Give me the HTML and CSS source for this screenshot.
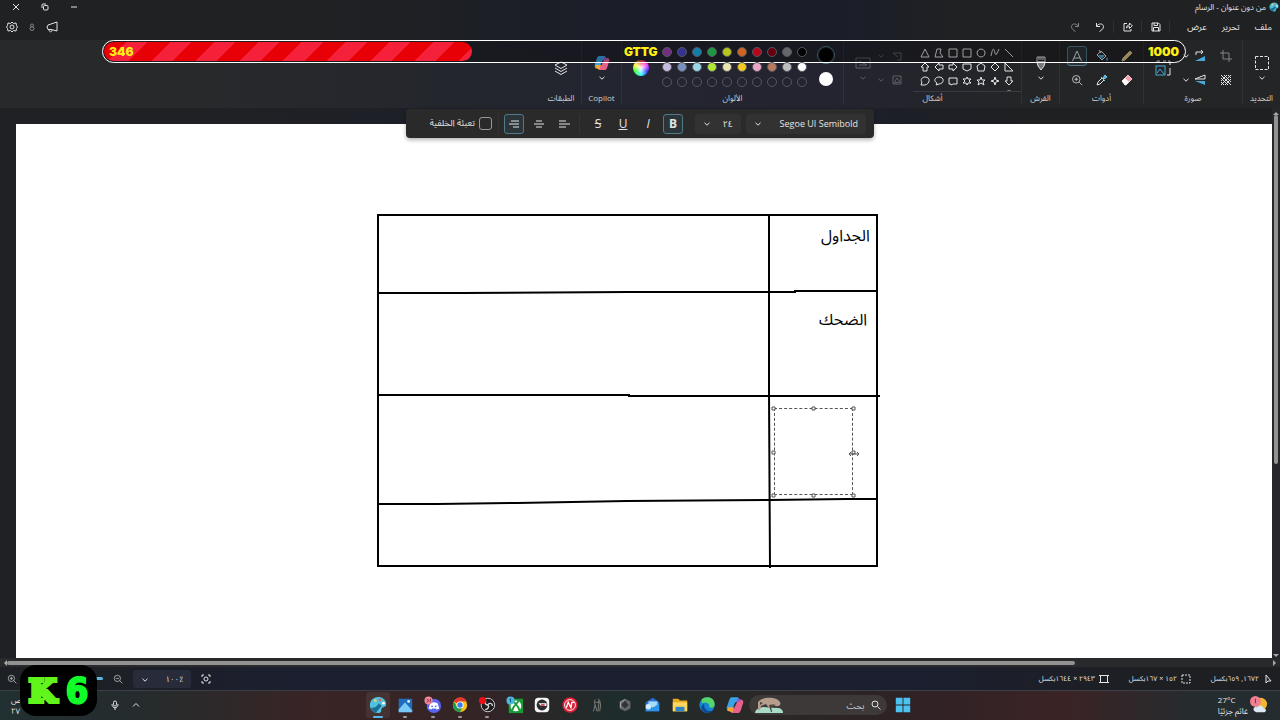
FILE: index.html
```html
<!DOCTYPE html>
<html lang="ar" dir="rtl">
<head>
  <meta charset="UTF-8" />
  <meta name="viewport" content="width=device-width, initial-scale=1.0" />
  <title>من دون عنوان - الرسام</title>
  <link rel="stylesheet" href="styles.css">
</head>
<body>
  <!-- Shared icons -->
  <svg class="sprite" aria-hidden="true">
    <symbol id="chev" viewBox="0 0 8 8"><path d="M1.5 2.8 4 5.2 6.500 2.800"/></symbol>
    <symbol id="palette" viewBox="0 0 20 20"><path fill="#4fc3dd" stroke="none" d="M10 1c5 0 9 3 9 8 0 4-4 3-5 5s1 5-4 5c-5 0-9-4-9-9s4-9 9-9z"/><path fill="#1d6e94" stroke="none" d="M2 13c3 0 6 0 9-5l3 3c-3 4-5 5-6 8-3-1-5-3-6-6z"/><circle cx="7" cy="5" r="1.500" fill="#e9d76b" stroke="none"/><circle cx="12" cy="4.500" r="1.500" fill="#d76a5b" stroke="none"/><circle cx="16" cy="8" r="1.500" fill="#fff" stroke="none"/></symbol>
    <symbol id="copilot" viewBox="0 0 16 16"><path fill="#3aa3e8" stroke="none" d="M5 1h5c1 0 2 1 2 3l-2 1-2 1-2 5c-.5 1-1 2-3 2-2 0-3-2-2-4l2-6c.5-1 1-2 2-2z"/><path fill="#e8618c" stroke="none" d="M11 15H6c-1 0-2-1-1-3l2-1 3-6c.5-1 1-2 3-2 2 0 3 2 2 4l-2 6c-.5 1-1 2-2 2z"/><path fill="#f0a63a" stroke="none" d="M2 10h5l-1 4c-.5 1-1 1-2 0L1 13z"/><path fill="#8c5be0" stroke="none" d="M10 2c2 0 2 1 3 3H9z"/></symbol>
    <symbol id="zoomin" viewBox="0 0 16 16"><circle cx="7" cy="7" r="5"/><path d="m11 11 4 4M4.500 7h5M7 4.500v5"/></symbol>
    <symbol id="zoomout" viewBox="0 0 16 16"><circle cx="7" cy="7" r="5"/><path d="m11 11 4 4M4.500 7h5"/></symbol>
  </svg>

  <!-- Title bar -->
  <header class="titlebar">
    <div class="app-title">
      <svg class="ico s10"><use href="#palette"/></svg>
      <span>من دون عنوان - الرسام</span>
    </div>
    <div class="window-buttons">
      <button aria-label="تصغير"><svg class="ico s8" viewBox="0 0 8 8"><path d="M1 4h6"/></svg></button>
      <button aria-label="استعادة"><svg class="ico s8" viewBox="0 0 8 8"><rect x="2.500" y="2.500" width="4.500" height="4.500" rx="1"/><path d="M1 5V2q0-1 1-1h3"/></svg></button>
      <button aria-label="إغلاق"><svg class="ico s8" viewBox="0 0 8 8"><path d="m1 1 6 6M7 1 1 7"/></svg></button>
    </div>
  </header>

  <nav class="menubar">
    <div class="menus">
      <button>ملف</button>
      <button>تحرير</button>
      <button>عرض</button>
    </div>
    <div class="quick">
      <button aria-label="حفظ"><svg class="ico s10" viewBox="0 0 10 10"><path d="M1 1h6.500L9 2.500V9H1zM3 1v2.500h3.500V1M2.500 9V5.500h5V9"/></svg></button>
      <button aria-label="مشاركة"><svg class="ico s10" viewBox="0 0 10 10"><path d="M4 1.500H1V9h7V7M3.500 6c0-2 1-3 3-3V1L9.300 3.800 6.500 6.500V4.700c-1.500 0-2 .3-3 1.300z"/></svg></button>
      <button aria-label="تراجع"><svg class="ico s10" viewBox="0 0 10 10"><path d="M1.500 1v3.500H5M1.700 4.300C3 1.500 8 .8 8.500 4.500 8.500 7 6.500 8 4.500 9.500"/></svg></button>
      <button aria-label="إعادة" class="dim"><svg class="ico s10" viewBox="0 0 10 10"><path d="M8.500 1v3.500H5M8.300 4.300C7 1.500 2 .8 1.500 4.500 1.500 7 3.500 8 5.500 9.500"/></svg></button>
    </div>
    <div class="menu-end">
      <button aria-label="ملاحظات"><svg class="ico s12" viewBox="0 0 12 12"><path d="M11 1v9L5 8.500H2L1 6l1-2zM3 8.500c0 3 3 3 3 .5"/></svg></button>
      <button aria-label="الحساب"><svg class="ico s8 dim" viewBox="0 0 8 8"><circle cx="4" cy="2.500" r="1.500"/><circle cx="4" cy="5.500" r="2"/></svg></button>
      <button aria-label="الإعدادات"><svg class="ico s12" viewBox="0 0 12 12"><path d="m6 1 1.500 1.500L10 2l.5 2.500L11.500 6l-1 1.500L10 10l-2.500-.5L6 11 4.500 9.500 2 10l-.5-2.500L.5 6l1-1.500L2 2l2.500.5z"/><circle cx="6" cy="6" r="2"/></svg></button>
    </div>
  </nav>

  <!-- Ribbon -->
  <section class="ribbon">
    <div class="group g-select">
      <div class="tools stack">
        <button aria-label="تحديد"><svg class="ico s16" viewBox="0 0 16 16"><rect x="1.500" y="1.500" width="13" height="13" stroke-dasharray="3 1.500"/></svg></button>
        <svg class="ico s8"><use href="#chev"/></svg>
      </div>
      <h2>التحديد</h2>
    </div>

    <div class="group g-image">
      <div class="tools image-grid">
        <button aria-label="اقتصاص" class="dim"><svg class="ico s12" viewBox="0 0 12 12"><path d="M3 0v9h9M0 3h9v9"/></svg></button>
        <button aria-label="استدارة"><svg class="ico s12" viewBox="0 0 12 12"><path d="M2 5V2h7M7 0l2 2-2 2"/><path fill="#4aa8d8" stroke="none" d="M1 11h10V6z"/></svg></button>
        <svg class="ico s8"><use href="#chev"/></svg>
        <button aria-label="تغيير الحجم" class="resize"><svg class="ico s16" viewBox="0 0 16 16"><path d="M2 3V1h3M8 1h3M13 1h2v4M15 8v7h-3"/><g stroke="#4aa8d8"><rect x="1" y="6" width="9" height="9"/><path d="m2 13 3-4 4 5"/></g></svg></button>
        <button aria-label="إزالة الخلفية"><svg class="ico s12" viewBox="0 0 12 12"><path d="M1 1l10 10M1 4l7 7M4 1l7 7M8 1l3 3M1 8l3 3M11 1 1 11M7 1 1 7M11 5l-6 6"/></svg></button>
        <button aria-label="انعكاس"><svg class="ico s12" viewBox="0 0 12 12"><path d="M1 5 11 1v4z"/><path fill="#4aa8d8" stroke="none" d="M1 7h10v4z"/></svg></button>
        <svg class="ico s8"><use href="#chev"/></svg>
      </div>
      <h2>صورة</h2>
    </div>

    <div class="group g-tools">
      <div class="tools tool-grid">
        <button aria-label="قلم"><svg class="ico s12" viewBox="0 0 12 12"><path fill="#e4c070" stroke="#c8c0a0" d="M1 11l1-3 7-7 2 2-7 7z"/></svg></button>
        <button aria-label="تعبئة"><svg class="ico s12" viewBox="0 0 12 12"><path d="M1 5l4-4 5 5-4 4zM3 0l2 3"/><path fill="#4aa8d8" stroke="none" d="M2 5h7L6 9zM11 7c2 3 0 4 0 4s-2-1 0-4z"/></svg></button>
        <button aria-label="نص" class="on"><svg class="ico s12" viewBox="0 0 12 12"><path d="M1.500 11 6 1l4.500 10M3 8h6"/></svg></button>
        <button aria-label="ممحاة"><svg class="ico s12" viewBox="0 0 12 12"><path fill="#f3a0ac" stroke="#e8c8cc" d="M1 7l6-6 4 4-6 6H4z"/><path fill="#fff" stroke="none" d="M1 7l3-3 4 4-3 3H4z"/></svg></button>
        <button aria-label="منتقي الألوان"><svg class="ico s12" viewBox="0 0 12 12"><path d="M1 11l1-3 4-4 2 2-4 4z"/><path fill="#4aa8d8" stroke="#8cc8e8" d="M5 3l4 4M7 4l2-3 2 2-3 2z"/></svg></button>
        <button aria-label="مكبر"><svg class="ico s12"><use href="#zoomin"/></svg></button>
      </div>
      <h2>أدوات</h2>
    </div>

    <div class="group g-brush">
      <div class="tools stack">
        <button aria-label="الفرش"><svg class="ico s16" viewBox="0 0 16 16"><path d="M4 2h8v5H4zM6 2v3M8 2v3M10 2v3"/><path fill="#777" d="M4 7h8l-1 4-3 4-3-4z"/></svg></button>
        <svg class="ico s8"><use href="#chev"/></svg>
      </div>
      <h2>الفرش</h2>
    </div>

    <div class="group g-shapes">
      <div class="tools">
        <div class="gallery" id="gallery"></div>
        <div class="shape-opts faint">
          <button aria-label="المخطط التفصيلي"><svg class="ico s10" viewBox="0 0 10 10"><path d="M1 2h8v7H5M1 2l5 4"/></svg></button>
          <svg class="ico s8"><use href="#chev"/></svg>
          <button aria-label="تعبئة الشكل"><svg class="ico s10" viewBox="0 0 10 10"><path d="M1 1h8v8H1zM2 8l3-5 3 4z"/></svg></button>
          <svg class="ico s8"><use href="#chev"/></svg>
        </div>
        <div class="stack faint">
          <button aria-label="الحجم"><svg class="ico s16" viewBox="0 0 16 16"><path d="M1 3h14v10H1zM4 6l8 4M4 10h8"/></svg></button>
          <svg class="ico s8"><use href="#chev"/></svg>
        </div>
      </div>
      <h2>أشكال</h2>
    </div>

    <div class="group g-colors">
      <div class="tools">
        <div class="current">
          <button aria-label="اللون 1" class="color1"></button>
          <button aria-label="اللون 2" class="color2"></button>
        </div>
        <div class="swatches" id="swatches"></div>
        <button class="wheel" aria-label="تحرير الألوان"></button>
      </div>
      <h2>الألوان</h2>
    </div>

    <div class="group g-copilot">
      <div class="tools stack">
        <button aria-label="Copilot"><svg class="ico s16"><use href="#copilot"/></svg></button>
        <svg class="ico s8"><use href="#chev"/></svg>
      </div>
      <h2>Copilot</h2>
    </div>

    <div class="group g-layers">
      <div class="tools stack">
        <button aria-label="الطبقات"><svg class="ico s14" viewBox="0 0 14 14"><path d="m7 1 6 3-6 3.500L1 4zM1 7l6 3.500L13 7M1 10l6 3.500 6-3.500"/></svg></button>
      </div>
      <h2>الطبقات</h2>
    </div>
  </section>

  <!-- Stream goal bar -->
  <div class="goal">
    <div class="goal-fill"></div>
    <span>1000</span>
    <span>GTTG</span>
    <span>346</span>
  </div>

  <!-- Drawing area -->
  <main class="workspace">
    <div class="vscroll"><i class="up"></i><b></b><i class="down"></i></div>
    <div class="paper">
      <svg class="drawing" viewBox="0 0 504 356" aria-hidden="true">
        <path d="M0 2h501M1 1v352M500 1v352M0 353h501M392 2v178l1 175"/>
        <path d="M0 80h84l167-1h167v-1h83M1 182h251v1h251M0 291h60l80-1 110-2 143-1 77-1h30"/>
      </svg>
      <span class="note note-a">الجداول</span>
      <span class="note note-b">الضحك</span>
      <textarea class="textbox" aria-label="مربع نص"></textarea>
      <svg class="handles" viewBox="0 0 90 94" aria-hidden="true">
        <path d="M1 1h3v3H1zM41 1h3v3h-3zM81 1h3v3h-3zM1 45h3v3H1zM81 45h3v3h-3zM1 88h3v3H1zM41 88h3v3h-3zM81 88h3v3h-3z"/>
        <path d="M78 48h10M80 46l-2 2 2 2M86 46l2 2-2 2"/>
      </svg>
    </div>
  </main>
  <div class="hscroll"><i class="right"></i><b></b><i class="left"></i></div>

  <!-- Text toolbar -->
  <div class="textbar">
    <label class="pick font"><select aria-label="الخط"><option>Segoe UI Semibold</option></select><svg class="ico s8"><use href="#chev"/></svg></label>
    <label class="pick size"><select aria-label="حجم الخط"><option>٢٤</option></select><svg class="ico s8"><use href="#chev"/></svg></label>
    <div class="fmt">
      <button class="on"><b>B</b></button>
      <button><i>I</i></button>
      <button><u>U</u></button>
      <button><s>S</s></button>
    </div>
    <div class="fmt align">
      <button aria-label="يسار"><svg class="ico s12" viewBox="0 0 12 12"><path d="M1 3h7M1 6h11M1 9h7"/></svg></button>
      <button aria-label="وسط"><svg class="ico s12" viewBox="0 0 12 12"><path d="M3 3h6M1 6h10M3 9h6"/></svg></button>
      <button aria-label="يمين" class="on"><svg class="ico s12" viewBox="0 0 12 12"><path d="M3 3h8M1 6h10M5 9h6"/></svg></button>
    </div>
    <label class="fillbg"><input type="checkbox"><span>تعبئة الخلفية</span></label>
  </div>

  <!-- Status bar -->
  <footer class="status">
    <div class="info pos"><svg class="ico s10" viewBox="0 0 10 10"><path d="M3 1v8l2-2h3z"/></svg><span>١٦٧٢, ٦٥٩بكسل</span></div>
    <div class="info sel"><svg class="ico s10" viewBox="0 0 10 10"><path d="M1 1h8v8H1z" stroke-dasharray="2 1"/></svg><span>١٥٢ × ١٦٧بكسل</span></div>
    <div class="info"><svg class="ico s10" viewBox="0 0 10 10"><path d="M1.500 1.500h7v7h-7zM0 1.500h10M0 8.500h10"/></svg><span>٢٩٤٣ × ١٦٤٤بكسل</span></div>
    <div class="zoom">
      <button aria-label="ملاءمة"><svg class="ico s10" viewBox="0 0 10 10"><path d="M1 3V1h2M7 1h2v2M9 7v2H7M3 9H1V7"/><circle cx="5" cy="5" r="2"/></svg></button>
      <label class="pick level"><select aria-label="تكبير"><option>٪١٠٠</option></select><svg class="ico s8"><use href="#chev"/></svg></label>
      <button aria-label="تصغير"><svg class="ico s10"><use href="#zoomout"/></svg></button>
      <input type="range" aria-label="مستوى التكبير" value="50">
      <button aria-label="تكبير"><svg class="ico s10"><use href="#zoomin"/></svg></button>
    </div>
  </footer>

  <!-- Windows taskbar -->
  <footer class="taskbar">
    <div class="weather">
      <svg viewBox="0 0 20 20"><circle cx="12" cy="9" r="7" fill="#f2b632"/><path fill="#dce8f6" d="M5 17c-3-3 1-6 3-4 1-4 7-3 7 1 4 0 3 4 1 4H7z"/><circle cx="6" cy="6" r="6" fill="#f07f92"/><path d="M6 3v5" stroke="#7a1f35"/></svg>
      <p><span dir="ltr">27°C</span><span>غائم جزئيًا</span></p>
    </div>
    <div class="center">
      <button aria-label="ابدأ"><svg viewBox="0 0 20 20"><path fill="#4cc2f1" d="M2 2h7.500v7.500H2zM10.500 2H18v7.500h-7.500zM2 10.500h7.500V18H2zM10.500 10.500H18V18h-7.500z"/></svg></button>
      <label class="search">
        <svg class="ico s10" viewBox="0 0 10 10"><circle cx="4" cy="4" r="3"/><path d="m6.500 6.500 3 3"/></svg>
        <input type="text" placeholder="بحث" aria-label="بحث">
        <svg class="art" viewBox="0 0 28 16"><path fill="#a9dcc8" d="M0 16c1-5 5-5 8-6l14 1c4 0 6 2 6 5z"/><path fill="#b59f8c" d="M3 5c3-5 18-6 22 0 2 3-2 5-4 4l-3-1-4 3-3-4-5 2-1 4H3z"/><path fill="#4d3e38" d="M14 8l2 7h1l-1-6 5-2zM5 5l3 1-3 2z"/></svg>
      </label>
      <div class="apps">
        <button aria-label="Copilot"><svg viewBox="0 0 16 16"><use href="#copilot"/></svg></button>
        <button aria-label="Edge"><svg viewBox="0 0 20 20"><circle cx="10" cy="10" r="8.500" fill="#1685d1"/><path fill="#55d66b" d="M4 4c5-5 15-3 14.500 6-.5 3-5 4-6 2 1-4-4-6-8-4z"/><path fill="#0b4c94" d="M7 9c-1 6 4 9 9 7-3 4-10 3-12-1-1-3 0-5 3-6z"/></svg></button>
        <button aria-label="المستكشف"><svg viewBox="0 0 20 20"><path fill="#e9a91f" d="M2 3h6l2 2h8v12H2z"/><path fill="#ffd75e" d="M2 7h16v10H2z"/><path fill="#2f83c9" d="M5 12h10v5H5z"/></svg></button>
        <button aria-label="البريد"><svg viewBox="0 0 20 20"><path fill="#2a6fd6" d="M3 7l8-5 7 5v10H3z"/><path fill="#a8dafa" d="M6 6h10v7H6z"/><path fill="#2e93ea" d="M3 8l8 5 7-5v9H3z"/><circle cx="6" cy="12" r="3" fill="#d5edff"/></svg></button>
        <button aria-label="Unity"><svg viewBox="0 0 20 20"><path fill="#64686b" d="m10 3 6 3v8l-6 3-6-3V6z"/><path fill="#303436" d="m10 5 4 5-4 4-4-4z"/><path stroke="#aaa" fill="none" d="M5 13V7l5-3"/></svg></button>
        <button aria-label="لعبة"><svg viewBox="0 0 20 20"><path fill="none" stroke="#85867f" d="M8 4l-1 3 1 3-2 7M8 10l2 7M12 3v6l-1 8M13 5l1 5-1 7M8 7h5"/></svg></button>
        <button aria-label="تطبيق N"><svg viewBox="0 0 20 20"><circle cx="10" cy="10" r="8.500" fill="#d91e35"/><circle cx="10" cy="10" r="6" fill="none" stroke="#fff"/><path fill="none" stroke="#fff" stroke-width="1.500" d="M6 13l2-6 3 6 1-6h3"/></svg></button>
        <button aria-label="مشغل"><svg viewBox="0 0 20 20"><rect x="2" y="2" width="16" height="16" rx="4" fill="#f4f4f4"/><circle cx="10" cy="10" r="6" fill="#2b2b2f"/><path fill="#fff" d="M6 8h9v3H9z"/><path fill="#d13d4a" d="M9 9h4v2H9z"/></svg></button>
        <button aria-label="Xbox"><svg viewBox="0 0 20 20"><path fill="#189b35" d="M3 3h16v16H3z"/><circle cx="11" cy="11" r="6" fill="#fff"/><path stroke="#189b35" stroke-width="2" fill="none" d="M7 16c1-4 4-7 4-7s3 3 4 7M8 6l3 3 3-3"/><circle cx="5" cy="5" r="4.500" fill="#4cb7e0"/><path fill="none" stroke="#104c70" d="M4 4l1-1v4"/></svg></button>
        <button aria-label="OBS" class="open"><svg viewBox="0 0 20 20"><circle cx="11" cy="10" r="7.500" fill="#1d1b1d" stroke="#d8d8d8"/><path fill="none" stroke="#d8d8d8" stroke-width="1.500" d="M11 10c-3 0-4-3-2-5M11 10c1-3 5-2 5 1M11 10c2 2 0 5-3 5"/><circle cx="5" cy="5" r="4" fill="#e80e13"/></svg></button>
        <button aria-label="Chrome" class="open"><svg viewBox="0 0 20 20"><circle cx="10" cy="10" r="8" fill="#fbc116"/><path fill="#e33b2e" d="M3 6c4-7 13-5 14.500 0H10v4z"/><path fill="#229a4d" d="M3 6c-3 6 2 12 7 12l3-6-6 0z"/><circle cx="10" cy="10" r="4" fill="#fff"/><circle cx="10" cy="10" r="3" fill="#3b7ded"/></svg></button>
        <button aria-label="Discord" class="open"><svg viewBox="0 0 20 20"><circle cx="11" cy="11" r="8" fill="#5865f2"/><path fill="#fff" d="M7 8q4-2 8 0l2 6-3 1-1-1h-4l-1 1-3-1z"/><circle cx="9" cy="11.500" r="1" fill="#5865f2"/><circle cx="13" cy="11.500" r="1" fill="#5865f2"/><circle cx="5" cy="5" r="4.500" fill="#ef8a9b"/><path fill="none" stroke="#7b1b35" d="M3 7c3-1 2-4 0-3M7 3v4"/></svg></button>
        <button aria-label="الصور" class="open"><svg viewBox="0 0 20 20"><path fill="#1e6cbb" d="M3 3h15v15H3z"/><path fill="#78c9f8" d="m3 15 7-8 8 9v2H3z"/><circle cx="14" cy="6" r="1.500" fill="#fff"/></svg></button>
        <button aria-label="الرسام" class="open active"><svg viewBox="0 0 20 20"><use href="#palette"/></svg></button>
      </div>
    </div>
    <div class="tray">
      <button aria-label="إظهار المخفي"><svg class="ico s8" viewBox="0 0 8 8"><path d="M1 5.500 4 2.500l3 3"/></svg></button>
      <button aria-label="الميكروفون"><svg class="ico s10" viewBox="0 0 10 10"><rect x="3.500" y="1" width="3" height="5" rx="1.500"/><path d="M2 4c0 5 6 5 6 0M5 8v2"/></svg></button>
      <p class="clock"><span>ص</span><span>٢٧</span></p>
    </div>
  </footer>

  <div class="keys"><span class="k">K</span><span class="n">6</span></div>

  <script src="script.js"></script>
</body>
</html>
```
FILE: styles.css
```css
* {
  box-sizing: border-box;
}

body {
  margin: 0;
  height: 100vh;
  display: flex;
  flex-direction: column;
  position: relative;
  overflow: hidden;
  background: #1e2023;
  color: #e4e4e4;
  font-family: "Open Sans", "Noto Sans Arabic", "DejaVu Sans Condensed", "DejaVu Sans", sans-serif;
  font-size: 8px;
}

button {
  display: flex;
  align-items: center;
  justify-content: center;
  padding: 0;
  border: 0;
  background: none;
  color: inherit;
  font: inherit;
}

select,
input {
  font: inherit;
  color: inherit;
}

h2, p {
  margin: 0;
}

.sprite {
  position: absolute;
  width: 0;
  height: 0;
}

.ico {
  display: block;
  flex: none;
  fill: none;
  stroke: currentColor;
}

.s8 { width: 8px; height: 8px; }
.s10 { width: 10px; height: 10px; }
.s12 { width: 12px; height: 12px; }
.s14 { width: 14px; height: 14px; }
.s16 { width: 16px; height: 16px; }

.dim { opacity: 0.5; }
.faint { opacity: 0.3; }

/* title + menu */
.titlebar,
.menubar {
  display: flex;
  align-items: center;
  background: linear-gradient(90deg, #1f2123 25%, #1b1d29 50%, #1b1d29 65%, #1f2123 75%);
}

.titlebar {
  height: 14px;
  justify-content: space-between;
}

.app-title {
  display: flex;
  gap: 3px;
  align-items: center;
  padding-right: 1px;
}

.window-buttons {
  display: flex;
  gap: 21px;
  padding-left: 12px;
}

.menubar {
  height: 26px;
}

.menus {
  display: flex;
  width: 110px;
  padding-right: 8px;
  gap: 15px;
  font-size: 9px;
}

.quick {
  display: flex;
}

.quick button {
  width: 28px;
  height: 12px;
  border-right: 1px solid #2f3136;
}

.quick button.dim {
  border: 0;
  width: 22px;
}

.menu-end {
  display: flex;
  align-items: center;
  gap: 10px;
  margin-right: auto;
  padding-left: 6px;
}

/* ribbon */
.ribbon {
  display: flex;
  height: 68px;
  background: linear-gradient(90deg, #27292b 15%, #23252f 45%, #23242f 65%, #242527 80%);
}

.group {
  display: flex;
  flex-direction: column;
  padding-top: 4px;
  border-left: 1px solid #303238;
  height: 64px;
}

.group h2 {
  font-size: 8px;
  line-height: 12px;
  font-weight: 400;
  text-align: center;
  white-space: nowrap;
  color: #d0d0d0;
}

.g-select { width: 38px; }
.g-image { width: 99px; }
.g-tools { width: 84px; }
.g-brush { width: 38px; }
.g-shapes { width: 178px; }
.g-colors { width: 222px; }
.g-copilot { width: 40px; }
.g-layers { width: 40px; border: 0; }

.tools {
  display: flex;
  height: 48px;
}

.stack {
  display: flex;
  flex-direction: column;
  align-items: center;
  padding-top: 11px;
  gap: 3px;
}

.g-layers .stack {
  padding-top: 17px;
}

.image-grid {
  display: grid;
  grid-template: 24px 24px / 32px 20px 8px 1fr;
  align-items: center;
  justify-items: center;
}

.resize {
  grid-row: 1 / 3;
  grid-column: 4;
}

.tool-grid {
  display: grid;
  grid-template: 24px 24px / 25px 25px 25px;
  justify-content: center;
  place-items: center;
}

.on {
  width: 20px;
  height: 20px;
  border: 1px solid #50798a;
  border-radius: 3px;
  background: #2b3439;
}

.gallery {
  display: grid;
  grid-template-columns: repeat(7, 14px);
  grid-auto-rows: 14px;
  width: 108px;
  padding: 2px 5px 0 0;
  overflow: hidden;
  border-bottom: 1px solid #3a3b40;
}

.gallery button {
  width: 14px;
}

.shape-opts {
  display: grid;
  grid-template: 24px 24px / 32px 0;
  place-items: center;
}

.shape-opts + .stack {
  width: 36px;
}

.current {
  display: flex;
  flex-direction: column;
  align-items: center;
  gap: 8px;
  width: 34px;
  padding-top: 2px;
}

.current button {
  border-radius: 50%;
}

.color1 {
  width: 18px;
  height: 18px;
  border: 1px solid #4d7f91;
  background: #000;
  box-shadow: inset 0 0 0 1px #222;
}

.color2 {
  width: 14px;
  height: 14px;
  background: #fff;
}

.swatches {
  position: relative;
  z-index: 1;
  display: grid;
  grid-template-columns: repeat(10, 15px);
  grid-auto-rows: 15px;
  place-items: center;
}

.swatches button {
  width: 10px;
  height: 10px;
  border: 1px solid #55565f;
  border-radius: 50%;
}

.wheel {
  align-self: center;
  width: 16px;
  height: 16px;
  margin-right: 10px;
  border-radius: 50%;
  background: radial-gradient(#fff, transparent 65%), conic-gradient(#f33, #f3f, #33f, #3ff, #3f3, #ff3, #f33);
}

/* goal bar lies over the ribbon */
.goal {
  position: absolute;
  top: 40px;
  left: 102px;
  right: 94px;
  height: 23px;
  padding: 0 6px;
  display: flex;
  align-items: center;
  justify-content: space-between;
  overflow: hidden;
  border: 1px solid #fff;
  border-radius: 12px;
  background: rgba(0, 0, 0, 0.3);
  color: #ffee11;
  font-family: Inter, Roboto, sans-serif;
  font-size: 12px;
  font-weight: 900;
}

.goal span {
  position: relative;
}

.goal-fill {
  position: absolute;
  inset: 1px auto 1px 1px;
  width: 34%;
  border-radius: 10px;
  background: repeating-linear-gradient(135deg, #e80007 0 16px, #f5203a 16px 31px);
}

/* workspace */
.workspace {
  flex: 1;
  min-height: 0;
  display: grid;
  grid-template-columns: 8px 1fr;
  padding-left: 16px;
  background: linear-gradient(90deg, #1f2124 15%, #1d1f2b 45%, #1d1f2b 65%, #1e2022 80%);
}

.paper {
  position: relative;
  margin-top: 16px;
  background: #fff;
}

.vscroll {
  display: flex;
  flex-direction: column;
  align-items: center;
  justify-content: space-between;
  padding: 4px 0 1px;
  background: #26272a;
}

.vscroll b {
  width: 4px;
  height: 64%;
  margin-bottom: auto;
  border-radius: 2px;
  background: #929292;
}

.vscroll i,
.hscroll i {
  border: 3px solid transparent;
}

.vscroll .up { border-bottom-color: #aaa; border-top: 0; }
.vscroll .down { border-top-color: #aaa; border-bottom: 0; }

.hscroll {
  display: flex;
  align-items: center;
  height: 9px;
  padding: 0 4px;
  background: #292a2c;
}

.hscroll .right { border-left-color: #aaa; border-right: 0; }
.hscroll .left { border-right-color: #aaa; border-left: 0; }

.hscroll b {
  width: 84%;
  height: 4px;
  margin-right: auto;
  border-radius: 2px;
  background: #929292;
}

.drawing {
  position: absolute;
  left: 361px;
  top: 89px;
  width: 504px;
  height: 356px;
  fill: none;
  stroke: #000;
  stroke-width: 2;
}

.note {
  position: absolute;
  color: #000;
  font-size: 16px;
  line-height: 24px;
}

.note-a { left: 805px; top: 99px; }
.note-b { left: 803px; top: 183px; }

.textbox {
  position: absolute;
  left: 758px;
  top: 284px;
  width: 79px;
  height: 87px;
  padding: 0;
  border: 1px dashed #555;
  background: none;
  resize: none;
  outline: 0;
}

.handles {
  position: absolute;
  left: 755px;
  top: 282px;
  width: 90px;
  height: 94px;
  fill: #fff;
  stroke: #555;
}

/* floating text toolbar */
.textbar {
  position: absolute;
  top: 109px;
  left: 50%;
  transform: translateX(-50%);
  display: flex;
  align-items: center;
  width: 468px;
  height: 29px;
  padding: 0 8px;
  border-radius: 4px;
  background: #2a2a2b;
  box-shadow: 0 2px 4px rgba(0, 0, 0, 0.3);
  font-size: 9px;
}

.pick {
  position: relative;
  display: block;
}

.pick select {
  display: block;
  width: 100%;
  height: 20px;
  padding: 0 8px;
  border: 0;
  border-radius: 3px;
  background: #323233;
  appearance: none;
}

.pick .ico {
  position: absolute;
  left: 8px;
  top: 6px;
}

.pick.font {
  width: 120px;
  margin-left: 5px;
}

.pick.size {
  width: 46px;
  margin-left: 12px;
}

.fmt {
  display: flex;
  gap: 5px;
  font-size: 12px;
}

.fmt button {
  width: 20px;
  height: 20px;
}

.align {
  margin-right: 8px;
  padding: 0 5px;
  border-right: 1px solid #333;
  border-left: 1px solid #333;
}

.fillbg {
  display: flex;
  align-items: center;
  gap: 4px;
  margin-right: 6px;
  white-space: nowrap;
}

.fillbg input {
  width: 13px;
  height: 13px;
  margin: 0;
  border: 1px solid #999;
  border-radius: 3px;
  appearance: none;
}

/* status bar */
.status {
  display: flex;
  align-items: center;
  height: 23px;
  padding: 0 7px;
  background: linear-gradient(90deg, #1d2024 5%, #1c1f30 25%, #1c1f30 70%, #1d1f22 90%);
}

.info {
  display: flex;
  align-items: center;
  gap: 4px;
  white-space: nowrap;
  font-size: 7px;
}

.pos, .sel { width: 82px; }

.zoom {
  display: flex;
  align-items: center;
  gap: 10px;
  margin-right: auto;
}

.level {
  width: 58px;
}

.level select {
  height: 18px;
  background: #282b3a;
}

.zoom input {
  width: 76px;
  height: 3px;
  margin: 0;
  border-radius: 2px;
  background: #59b6dc;
  appearance: none;
}

.zoom input::-webkit-slider-thumb {
  appearance: none;
}

/* taskbar */
.taskbar {
  display: grid;
  grid-template-columns: 1fr auto 1fr;
  align-items: center;
  height: 30px;
  padding-bottom: 1px;
  border-top: 1px solid #3a3f48;
  background: linear-gradient(90deg, #213032, #262b2c 12%, #3a2425 25%, #332426 38%, #1e2c2c 48%, #292927 58%, #2e2225 70%, #3b2325 83%, #242c2f 94%);
}

.weather {
  display: flex;
  align-items: center;
  gap: 2px;
  padding-right: 12px;
}

.weather svg {
  width: 18px;
  height: 18px;
  fill: none;
}

.weather p,
.clock {
  display: flex;
  flex-direction: column;
  line-height: 11px;
  white-space: nowrap;
}

.center {
  display: flex;
  align-items: center;
}

.center button {
  width: 24px;
  height: 26px;
  border-radius: 3px;
}

.center button svg {
  display: block;
  width: 18px;
  height: 18px;
}

.search {
  display: flex;
  align-items: center;
  gap: 6px;
  width: 138px;
  height: 20px;
  margin: 0 4px 0 2px;
  padding: 0 6px;
  border-radius: 10px;
  background: #3c3938;
}

.search input {
  flex: 1;
  min-width: 0;
  padding: 0;
  border: 0;
  background: none;
  font-size: 9px;
}

.search input::placeholder {
  color: #c8c8c8;
}

.art {
  width: 28px;
  height: 16px;
}

.apps {
  display: flex;
  justify-content: space-between;
  width: 381px;
}

.apps button {
  position: relative;
}

.open::after {
  content: "";
  position: absolute;
  bottom: 0;
  width: 4px;
  height: 2px;
  border-radius: 1px;
  background: #999;
}

.active {
  background: #453232;
}

.active::after {
  width: 10px;
  background: #58b8e8;
}

.tray {
  display: flex;
  align-items: center;
  justify-content: flex-end;
  gap: 12px;
  padding-left: 11px;
}

.clock {
  width: 87px;
  align-items: flex-end;
}

/* key counter overlay */
.keys {
  position: absolute;
  left: 20px;
  bottom: 4px;
  display: flex;
  direction: ltr;
  align-items: center;
  justify-content: space-around;
  width: 77px;
  height: 51px;
  padding: 0 4px;
  border-radius: 16px;
  background: #000;
  font-weight: 900;
}

.k {
  color: #62f51c;
  font-family: "DejaVu Serif", serif;
  font-size: 32px;
  -webkit-text-stroke: 4px #62f51c;
}

.n {
  color: #10ff28;
  font-family: "Liberation Sans Narrow", "DejaVu Sans Condensed", "DejaVu Sans", sans-serif;
  font-size: 36px;
  -webkit-text-stroke: 2px #10ff28;
}
```
FILE: script.js
```js
const colors = [
  "#000000", "#65656a", "#66000f", "#b5081d", "#cf6424", "#b9c41c", "#1d9740", "#147ca8", "#363294", "#70307f",
  "#ffffff", "#bebebe", "#b97a5b", "#eda5c5", "#f5c824", "#eae4ae", "#b2e736", "#9bd7e5", "#7891c0", "#c5bddd"
];

const shapes = [
  "M1 1l8 8", "M1 8c2-10 3-7 4-3s2 0 4-4", "M5 1a4 4 0 1 0 .1 0z", "M1 1h8v8H1z", "M1 1h8v8H1z", "M1 9l2-8h4L6 5l3 4z", "M5 1l4 8H1z",
  "M1 1v8h8z", "M5 1l4 4-4 4-4-4z", "M5 1l4 3-1 5H2L1 4z", "M1 2h8v5L5 9 1 7z", "M1 3h4V1l4 4-4 4V7H1z", "M9 3H5V1L1 5l4 4V7h4z", "M3 9V5H1l4-4 4 4H7v4z",
  "M3 1v4H1l4 4 4-4H7V1z", "M5 1l1 3 3 1-3 1-1 3-1-3-3-1 3-1z", "M5 1l1 3h3L7 6l1 3-3-2-3 2 1-3-2-2h3z", "M5 1l1 2h3L7 5l2 2H6L5 9 4 7H1l2-2-2-2h3z", "M1 2h8v6H5L3 9V8H1z", "M5 1c6 0 5 7 0 7L2 9l1-2C-1 5 1 1 5 1z", "M5 1c6 0 5 7 0 8L1 9l1-3C0 4 2 1 5 1z",
  "M1 4c0-4 8-4 8 0", "M2 4l3-3 3 3"
];

const swatches = document.getElementById("swatches");
for (let i = 0; i < 30; i++) {
  const b = document.createElement("button");
  b.setAttribute("aria-label", "لون " + (i + 1));
  if (colors[i]) b.style.background = colors[i];
  swatches.appendChild(b);
}

const gallery = document.getElementById("gallery");
shapes.forEach((d, i) => {
  gallery.insertAdjacentHTML("beforeend",
    `<button aria-label="شكل ${i + 1}"><svg class="ico s10" viewBox="0 0 10 10"><path d="${d}"/></svg></button>`);
});
```
